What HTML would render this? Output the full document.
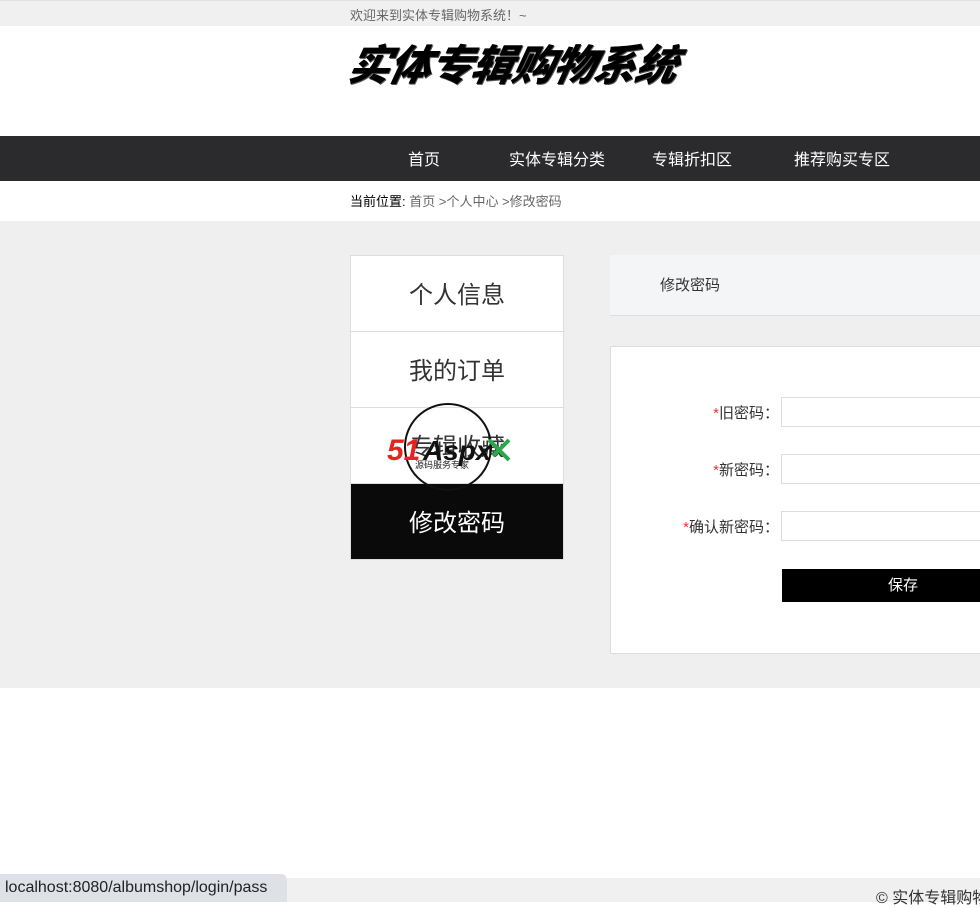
<!DOCTYPE html>
<html><head><meta charset="utf-8">
<style>
*{margin:0;padding:0;box-sizing:border-box}
body{width:980px;height:902px;overflow:hidden;background:#fff;position:relative;font-family:"Liberation Sans","Noto Sans CJK SC","Microsoft YaHei",sans-serif;color:#333}
.abs{position:absolute}
.top{left:0;top:0;width:980px;height:26px;background:#f0f0f0;border-top:1px solid #e2e2e2}
.top span{position:absolute;left:350px;top:4px;font-size:13px;color:#666}
.logo{left:343px;top:32px;font-size:42px;font-weight:900;font-style:italic;color:#000;letter-spacing:-1px;transform:skewX(-12deg);transform-origin:left bottom;text-shadow:1px 1px 0 #555;font-family:"Noto Sans CJK SC",sans-serif}
.nav{left:0;top:136px;width:980px;height:45px;background:#2b2b2d}
.nav span{position:absolute;top:10px;font-size:16px;color:#fff}
.crumb{left:350px;top:191px;font-size:13px;color:#000}
.crumb i{font-style:normal;color:#666}
.main{left:0;top:221px;width:980px;height:467px;background:#efefef}
.side{left:350px;top:255px;width:214px;height:305px;background:#fff;border:1px solid #ddd}
.side div{height:76px;border-bottom:1px solid #ddd;text-align:center;line-height:80px;font-size:24px;color:#333}
.side div.on{background:#0a0a0a;color:#fff;border:none;height:75px}
.hd{left:610px;top:255px;width:370px;height:61px;background:#f4f5f7;border-bottom:1px solid #ddd}
.hd span{position:absolute;left:50px;top:19px;font-size:15px;color:#333}
.form{left:610px;top:346px;width:370px;height:308px;background:#fff;border:1px solid #ddd;border-right:none}
.lbl{font-size:15px;color:#333;text-align:right;width:165px;left:614px;white-space:nowrap}
.lbl b{color:#e33;font-weight:normal}
.inp{left:781px;width:199px;height:30px;border:1px solid #ddd;border-right:none;background:#fff}
.btn{left:782px;top:569px;width:198px;height:33px;background:#000;color:#fff;font-size:15px;text-align:center;line-height:33px;padding-left:44px}
.foot{left:0;top:878px;width:980px;height:24px;background:#f0f0f0}
.status{left:0;top:874px;width:287px;height:28px;background:#dee1e6;border-top-right-radius:6px;font-size:16px;color:#222;padding:5px 0 0 5px}
.copy{left:876px;top:884px;font-size:16px;color:#333;white-space:nowrap}
</style></head><body>
<div class="abs top"><span>欢迎来到实体专辑购物系统！~</span></div>
<div class="abs logo">实体专辑购物系统</div>
<div class="abs nav">
<span style="left:408px">首页</span>
<span style="left:509px">实体专辑分类</span>
<span style="left:652px">专辑折扣区</span>
<span style="left:794px">推荐购买专区</span>
</div>
<div class="abs crumb">当前位置: <i>首页 &gt;个人中心 &gt;修改密码</i></div>
<div class="abs main"></div>
<div class="abs side">
<div>个人信息</div>
<div>我的订单</div>
<div>专辑收藏</div>
<div class="on">修改密码</div>
</div>
<svg class="abs" style="left:385px;top:402px" width="130" height="94" viewBox="0 0 130 94">
<circle cx="63" cy="45" r="43" fill="none" stroke="#111" stroke-width="2"/>
<text x="2" y="58" font-family="Liberation Sans,sans-serif" font-size="30" font-weight="bold" font-style="italic" fill="#e8231f">51</text>
<text x="38" y="58" font-family="Liberation Sans,sans-serif" font-size="28" font-weight="bold" font-style="italic" fill="#111">Aspx</text>
<path d="M104 38 L124 58 M124 38 L108 54" stroke="#2aa84a" stroke-width="4"/>
<text x="30" y="66" font-family="Noto Sans CJK SC,sans-serif" font-size="9" fill="#222">源码服务专家</text>
</svg>
<div class="abs hd"><span>修改密码</span></div>
<div class="abs form"></div>
<div class="abs lbl" style="top:402px"><b>*</b>旧密码：</div>
<div class="abs inp" style="top:397px"></div>
<div class="abs lbl" style="top:459px"><b>*</b>新密码：</div>
<div class="abs inp" style="top:454px"></div>
<div class="abs lbl" style="top:516px"><b>*</b>确认新密码：</div>
<div class="abs inp" style="top:511px"></div>
<div class="abs btn">保存</div>
<div class="abs foot"></div>
<div class="abs copy">© 实体专辑购物系统</div>
<div class="abs status">localhost:8080/albumshop/login/pass</div>
</body></html>
